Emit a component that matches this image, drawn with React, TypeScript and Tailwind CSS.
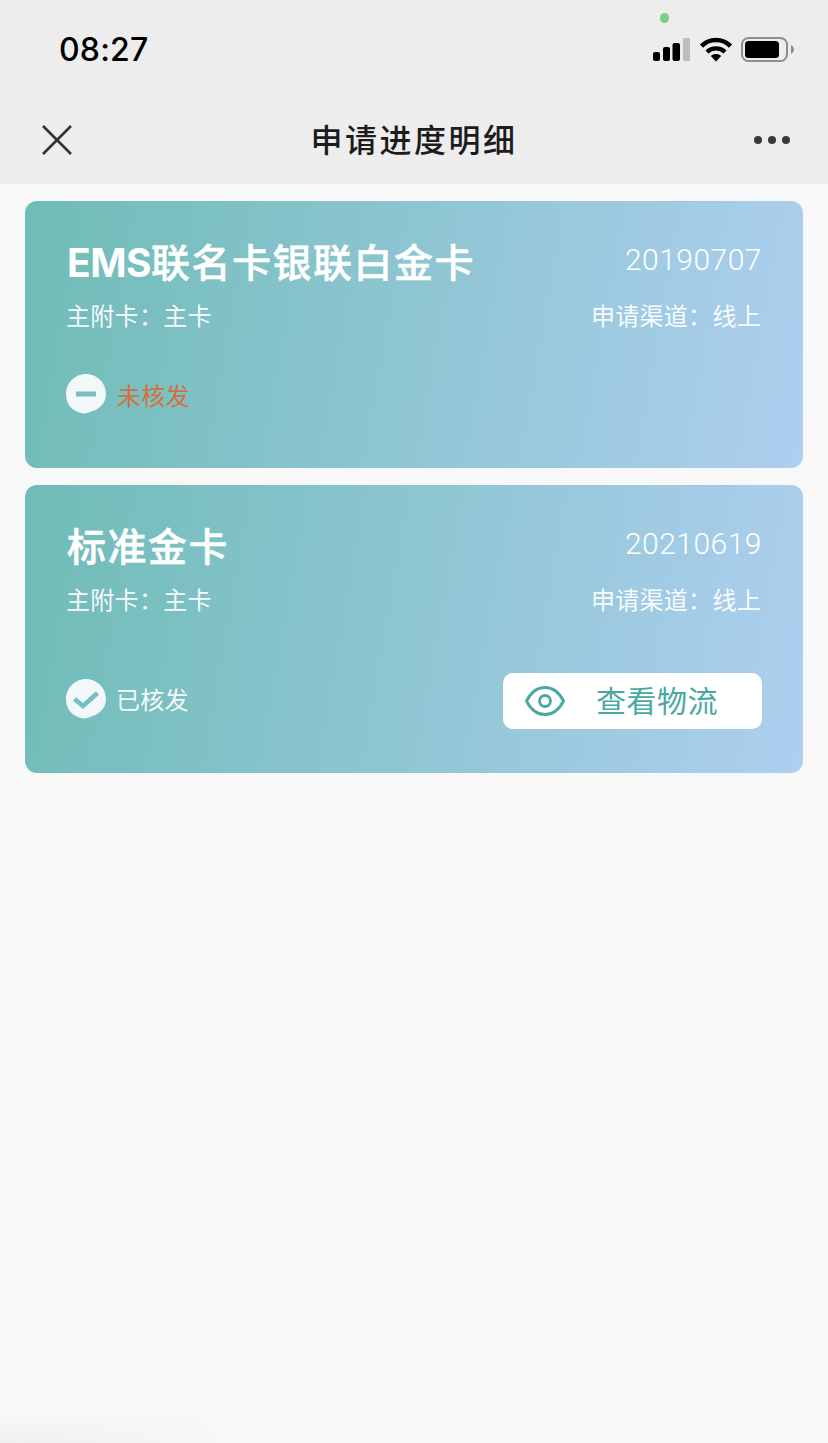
import React from "react";

function StatusIcons() {
  return (
    <div className="flex items-start">
      <svg width="37" height="26" viewBox="0 0 37 26" className="block">
        <rect x="0" y="15" width="7" height="9" rx="2" fill="#000" />
        <rect x="10" y="10" width="7" height="14" rx="2" fill="#000" />
        <rect x="19.5" y="6" width="7.5" height="18" rx="2" fill="#000" />
        <rect x="30" y="1" width="7" height="23" rx="1" fill="#bdbdbd" />
      </svg>
      <svg width="32" height="26" viewBox="0 0 32 26" className="ml-[10px] block">
        <path d="M1.5 9C9.5 1 22.5 1 30.5 9" fill="none" stroke="#000" strokeWidth="4.6" />
        <path d="M7 15C12 10.2 20 10.2 25 15" fill="none" stroke="#000" strokeWidth="4.4" />
        <path d="M10.8 19C14 16.4 18 16.4 21.2 19L16 24.5Z" fill="#000" />
      </svg>
      <svg width="53" height="26" viewBox="0 0 53 26" className="ml-[9px] block">
        <rect x="1" y="1" width="45" height="23" rx="6.5" fill="none" stroke="#8e8e8e" strokeWidth="2" />
        <rect x="4" y="4" width="34" height="17" rx="3.5" fill="#000" />
        <path d="M50 8C52 9 53 11 53 12.5C53 14 52 16 50 17Z" fill="#8e8e8e" />
      </svg>
    </div>
  );
}

function Header() {
  return (
    <div className="h-[184px] bg-[#ededed] relative shrink-0">
      <div className="absolute left-[660px] top-[13px] w-[9px] h-[10px] rounded-full bg-[#78d08a]" />
      <div className="h-[98px] pt-[28px] pl-[59px] pr-[34px] flex items-start justify-between">
        <span className="text-[32px] leading-[44px] font-medium text-black font-['Inter','Roboto',sans-serif] tracking-[0.2px]">
          08:27
        </span>
        <div className="pt-[9px]">
          <StatusIcons />
        </div>
      </div>
      <div className="h-[86px] pl-[41px] pr-[38px] flex items-start justify-between">
        <svg width="32" height="32" viewBox="0 0 32 32" className="mt-[26px] block">
          <path d="M2 2L30 30M30 2L2 30" stroke="#333" strokeWidth="2.6" fill="none" />
        </svg>
        <h1 className="text-[32px] leading-[44px] mt-[18px] ml-[1px] font-medium text-[#1c1c1c] tracking-[2.5px] font-['Noto_Sans_CJK_SC',sans-serif]">
          申请进度明细
        </h1>
        <div className="mt-[38px] flex gap-[6px]">
          <span className="w-[8px] h-[8px] rounded-full bg-[#3a3a3a]" />
          <span className="w-[8px] h-[8px] rounded-full bg-[#3a3a3a]" />
          <span className="w-[8px] h-[8px] rounded-full bg-[#3a3a3a]" />
        </div>
      </div>
    </div>
  );
}

// the badges in the reference are slightly lumpy circles, flatter at the lower right
const blob = "M20 0C31 0 40 9 40 20C40 30 32 36 24 38C21 39.5 18 40 15 39C6 37 0 30 0 20C0 9 9 0 20 0Z";

function MinusBadge() {
  return (
    <svg width="40" height="40" viewBox="0 0 40 40" className="block shrink-0 mb-[2px]">
      <path d={blob} fill="#f2f8f9" />
      <rect x="10" y="17.5" width="20" height="5" fill="#75bfbc" />
    </svg>
  );
}

function CheckBadge() {
  return (
    <svg width="40" height="40" viewBox="0 0 40 40" className="block shrink-0 mb-[1px]">
      <path d={blob} fill="#f2f8f9" />
      <path d="M8.5 20L17 27L31.5 14" fill="none" stroke="#75bfbc" strokeWidth="4.6" />
    </svg>
  );
}

function Card({
  title,
  code,
  height,
  children,
}: {
  title: React.ReactNode;
  code: string;
  height: string;
  children: React.ReactNode;
}) {
  return (
    <div className={`rounded-[12px] bg-[linear-gradient(100deg,#6fbcb6,#aecff0)] pt-[34px] pl-[41px] pr-[41px] text-white ${height}`}>
      <div className="flex items-start justify-between">
        <h2 className="ml-[1px] text-[39px] leading-[56px] font-medium tracking-[1.5px] [-webkit-text-stroke:0.5px_white] font-['Inter','Noto_Sans_CJK_SC',sans-serif]">
          {title}
        </h2>
        <span className="text-[30px] leading-[44px] mt-[3px] font-light text-white font-['Roboto',sans-serif] tracking-[0.5px]">
          {code}
        </span>
      </div>
      <div className="flex justify-between mt-[6px] mr-[1px] text-[24px] leading-[36px] tracking-[0.3px] text-white/95">
        <span>主附卡：主卡</span>
        <span>申请渠道：线上</span>
      </div>
      {children}
    </div>
  );
}

export default function App() {
  return (
    <div className="w-[828px] h-[1443px] relative overflow-hidden bg-[#f8f8f8] flex flex-col font-['Noto_Sans_CJK_SC',sans-serif]">
      <Header />
      <div className="px-[25px] pt-[17px] flex flex-col gap-[17px]">
        <Card
          title={
            <>
              <span className="font-bold tracking-[-0.5px] [-webkit-text-stroke:0]">EMS</span>联名卡银联白金卡
            </>
          }
          code="20190707"
          height="h-[267px]"
        >
          <div className="flex items-center gap-[11px] mt-[41px]">
            <MinusBadge />
            <span className="text-[24px] leading-[36px] tracking-[0.3px] text-[#d4703c]">未核发</span>
          </div>
        </Card>
        <Card title="标准金卡" code="20210619" height="h-[288px]">
          <div className="flex items-center justify-between mt-[56px]">
            <div className="flex items-center gap-[10px] mb-[4px]">
              <CheckBadge />
              <span className="text-[24px] leading-[36px] tracking-[0.3px] text-white/95">已核发</span>
            </div>
            <button className="w-[259px] h-[56px] bg-white rounded-[10px] flex items-center pl-[22px] text-[#4aa8a3]">
              <svg width="40" height="30" viewBox="0 0 40 30" className="block">
                <path
                  d="M1.5 15C6 6 13 1.5 20 1.5C27 1.5 34 6 38.5 15C34 24 27 28.5 20 28.5C13 28.5 6 24 1.5 15Z"
                  fill="none"
                  stroke="#4aa8a3"
                  strokeWidth="2.8"
                />
                <circle cx="20" cy="15" r="5.5" fill="none" stroke="#4aa8a3" strokeWidth="2.8" />
              </svg>
              <span className="ml-[31px] mb-[5px] text-[30px] leading-[40px] tracking-[0.5px]">查看物流</span>
            </button>
          </div>
        </Card>
      </div>
      <div className="absolute left-0 bottom-0 w-[220px] h-[30px] bg-gradient-to-t from-[#efefef] to-transparent [mask-image:linear-gradient(to_right,black,transparent)]" />
    </div>
  );
}
